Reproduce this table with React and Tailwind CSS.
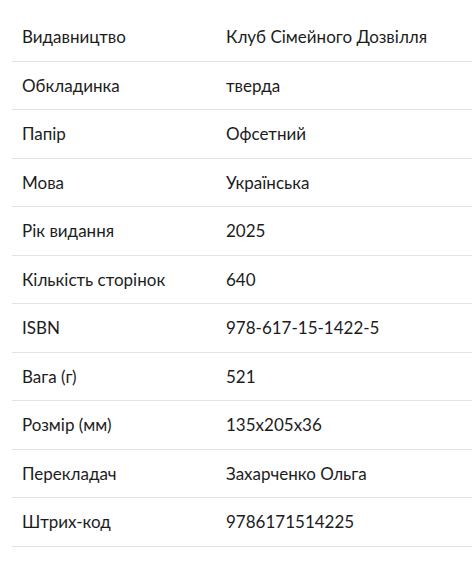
export default function App() {
  const rows = [
    ["Видавництво", "Клуб Сімейного Дозвілля"],
    ["Обкладинка", "тверда"],
    ["Папір", "Офсетний"],
    ["Мова", "Українська"],
    ["Рік видання", "2025"],
    ["Кількість сторінок", "640"],
    ["ISBN", "978-617-15-1422-5"],
    ["Вага (г)", "521"],
    ["Розмір (мм)", "135x205x36"],
    ["Перекладач", "Захарченко Ольга"],
    ["Штрих-код", "9786171514225"],
  ];
  return (
    <div className="w-[472px] h-[578px] bg-white pl-3 pt-[13px] font-['Lato',sans-serif] text-[17px] text-[#1c1c1c]">
      {rows.map(([k, v]) => (
        <div key={k} className="flex border-b border-[#e2e2e8] py-3 leading-[23.5px]">
          <div className="w-[214px] shrink-0 pl-[10px]">{k}</div>
          <div>{v}</div>
        </div>
      ))}
    </div>
  );
}
